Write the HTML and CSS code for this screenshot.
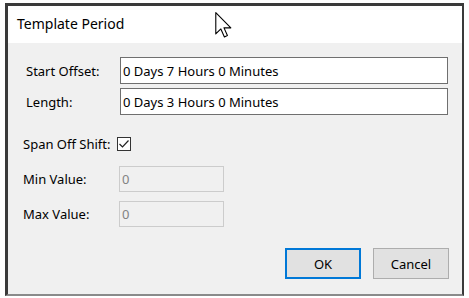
FILE: index.html
```html
<!DOCTYPE html>
<html>
  <head>
    <meta name="viewport" content="width=device-width, initial-scale=1">
    <link rel="stylesheet" href="styles.css">
  </head>
  <body>
    <div class="window">
      <div class="titlebar">Template Period</div>
      <form class="content">
        <div class="times">
          <label class="label" for="start_offset">Start Offset:</label>
          <input type="text" id="start_offset" class="text" value="0 Days 7 Hours 0 Minutes">
          <label class="label" for="length">Length:</label>
          <input type="text" id="length" class="text" value="0 Days 3 Hours 0 Minutes">
        </div>
        <div class="span">
          <span class="label">Span Off Shift:</span>
          <span class="checkbox">
            <svg width="14" height="14" viewBox="0 0 14 14"><polyline points="2.5,7 5.5,10 11.5,3.5" fill="none" stroke="#222" stroke-width="1.2"/></svg>
          </span>
        </div>
        <div class="limits">
          <label class="label" for="min_value">Min Value:</label>
          <input type="text" id="min_value" class="small" value="0" disabled>
          <label class="label" for="max_value">Max Value:</label>
          <input type="text" id="max_value" class="small" value="0" disabled>
        </div>
        <div class="buttons">
          <button type="button" class="button default">OK</button>
          <button type="button" class="button">Cancel</button>
        </div>
      </form>
    </div>
    <svg class="cursor" width="18" height="26" viewBox="0 0 13 19">
      <path d="M0.5,0.5 L0.5,16 L4.2,12.4 L6.8,18.2 L9,17.2 L6.5,11.6 L11.5,11.6 Z" fill="#fff" stroke="#000" stroke-width="0.8" stroke-linejoin="round"/>
    </svg>
  </body>
</html>
```

FILE: styles.css
```css
body { margin: 0; background: white; font-family: "Noto Sans", "Open Sans", sans-serif; font-size: 13px; color: #000 }
.window { position: relative; margin: 3px 0 0 5px; width: 454px; height: 288px; border-top: 3px solid #3a3a3a; border-left: 3px solid #3a3a3a; border-right: 2px solid #3a3a3a; border-bottom: 2px solid #8a8a8a; display: flex; flex-direction: column }
.titlebar { height: 37px; line-height: 36px; padding-left: 9px; font-size: 14px; background: white }
.content { flex: 1; margin: 0; background: #f0f0f0; display: flex; flex-direction: column }
.label { white-space: nowrap }
input { font-family: inherit; font-size: 13px; margin: 0; box-sizing: border-box; padding: 0 2px; outline: none }
.times { display: grid; grid-template-columns: 94px 328px; row-gap: 4px; align-items: center; margin: 14px 0 0 18px }
.text { height: 27px; border: 1px solid #6f6f6f; background: white; color: #000 }
.span { display: flex; align-items: center; margin: 22px 0 0 15px; height: 14px }
.span .label { width: 94px }
.checkbox { width: 14px; height: 14px; box-sizing: border-box; border: 1px solid #333; background: white; display: flex }
.checkbox svg { margin: -1px }
.limits { display: grid; grid-template-columns: 96px 105px; row-gap: 9px; align-items: center; margin: 15px 0 0 15px }
.small { height: 26px; border: 1px solid #cccccc; background: #f0f0f0; color: #838383 }
.buttons { display: flex; justify-content: flex-end; gap: 12px; margin: 21px 13px 0 0 }
.button { width: 76px; height: 31px; font-family: inherit; font-size: 13px; background: #e1e1e1; border: 1px solid #adadad; color: #000; padding: 0 }
.default { border: 2px solid #0078d7 }
.cursor { position: absolute; left: 215px; top: 12px }
```
